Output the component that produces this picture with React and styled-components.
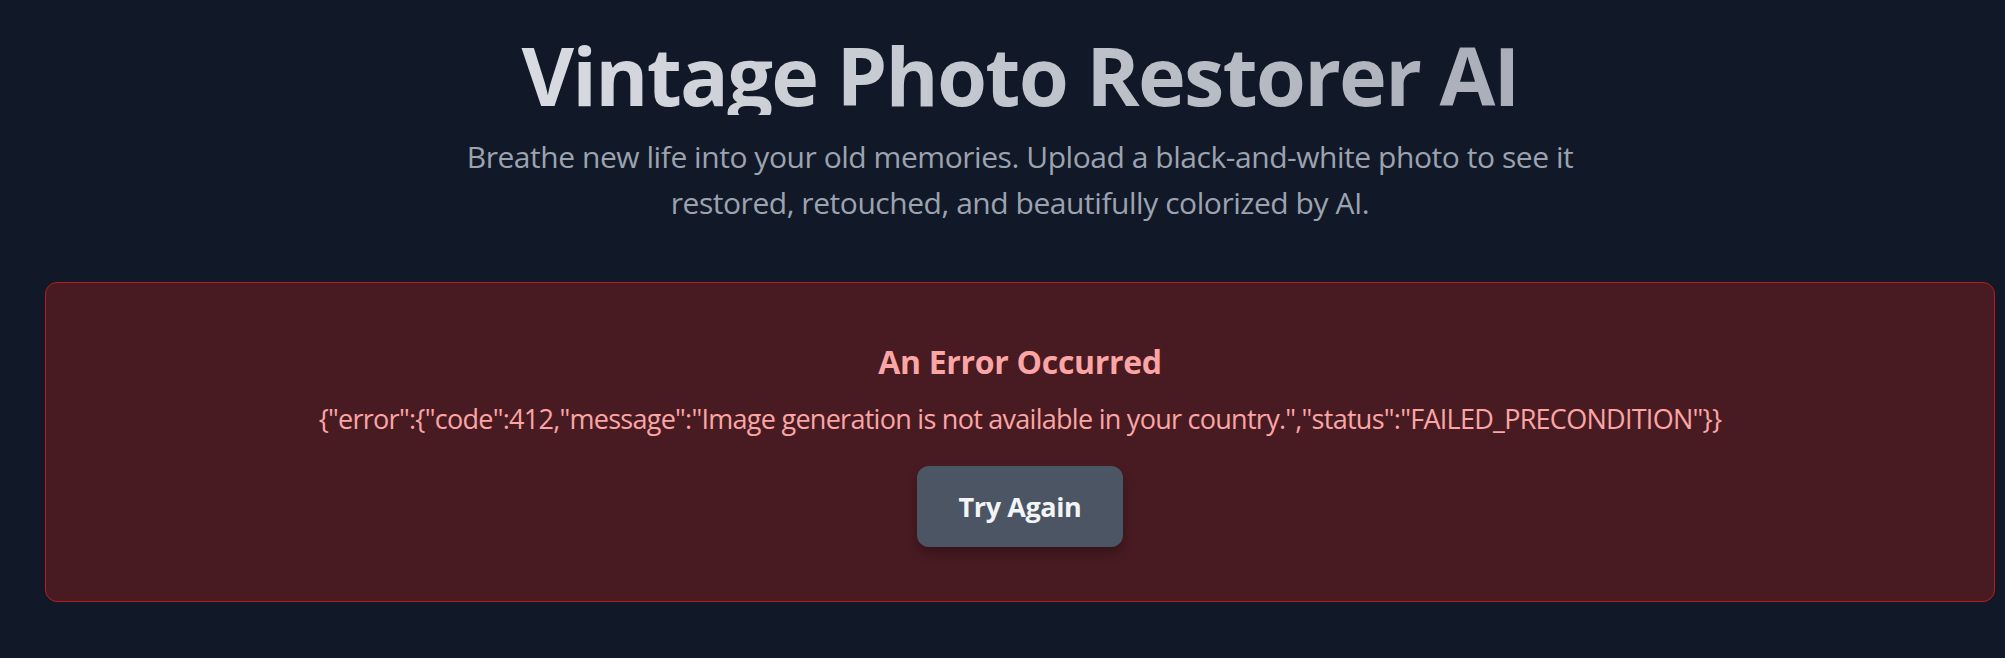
import React from "react";
import styled, { createGlobalStyle } from "styled-components";

const GlobalStyle = createGlobalStyle`
  html, body {
    margin: 0;
    padding: 0;
    background: #111827;
  }
  body {
    font-family: "Open Sans", "Noto Sans", sans-serif;
    color: #e5e7eb;
  }
`;

const Page = styled.main`
  min-height: 658px;
  box-sizing: border-box;
  padding: 34px 10px 40px 45px;
  display: flex;
  flex-direction: column;
  align-items: center;
`;

const Header = styled.header`
  display: flex;
  flex-direction: column;
  align-items: center;
  text-align: center;
`;

const Title = styled.h1`
  margin: 0;
  font-size: 81px;
  line-height: 1;
  font-weight: 700;
  letter-spacing: -1.8px;
  background: linear-gradient(to right, #d8dbe1, #a9aeb8);
  -webkit-background-clip: text;
  background-clip: text;
  color: transparent;
`;

const Subtitle = styled.p`
  margin: 19px 0 0;
  max-width: 1152px;
  font-size: 30px;
  line-height: 46px;
  color: #9ca3af;
  letter-spacing: -0.45px;
`;

const ErrorCard = styled.section`
  align-self: stretch;
  margin-top: 56px;
  padding: 54px;
  border: 1px solid #b91c1c;
  border-radius: 12px;
  background: rgba(127, 29, 29, 0.5);
  display: flex;
  flex-direction: column;
  align-items: center;
  text-align: center;
`;

const ErrorTitle = styled.h2`
  margin: 0;
  font-size: 32px;
  line-height: 50px;
  font-weight: 700;
  color: #fca5a5;
  letter-spacing: -0.3px;
`;

const ErrorMessage = styled.p`
  margin: 12px 0 0;
  font-size: 27px;
  line-height: 40px;
  color: #fca5a5;
  letter-spacing: -0.73px;
`;

const RetryButton = styled.button`
  margin-top: 27px;
  padding: 20px 42px;
  border: none;
  border-radius: 12px;
  background: #4b5563;
  color: #f3f4f6;
  font-family: inherit;
  font-size: 27px;
  line-height: 41px;
  font-weight: 700;
  letter-spacing: -0.4px;
  cursor: pointer;
  box-shadow: 0 6px 12px rgba(0, 0, 0, 0.25);
`;

export default function App() {
  return (
    <>
      <GlobalStyle />
      <Page>
        <Header>
          <Title>Vintage Photo Restorer AI</Title>
          <Subtitle>
            Breathe new life into your old memories. Upload a black-and-white photo to see it
            restored, retouched, and beautifully colorized by AI.
          </Subtitle>
        </Header>
        <ErrorCard>
          <ErrorTitle>An Error Occurred</ErrorTitle>
          <ErrorMessage>
            {'{"error":{"code":412,"message":"Image generation is not available in your country.","status":"FAILED_PRECONDITION"}}'}
          </ErrorMessage>
          <RetryButton type="button">Try Again</RetryButton>
        </ErrorCard>
      </Page>
    </>
  );
}
